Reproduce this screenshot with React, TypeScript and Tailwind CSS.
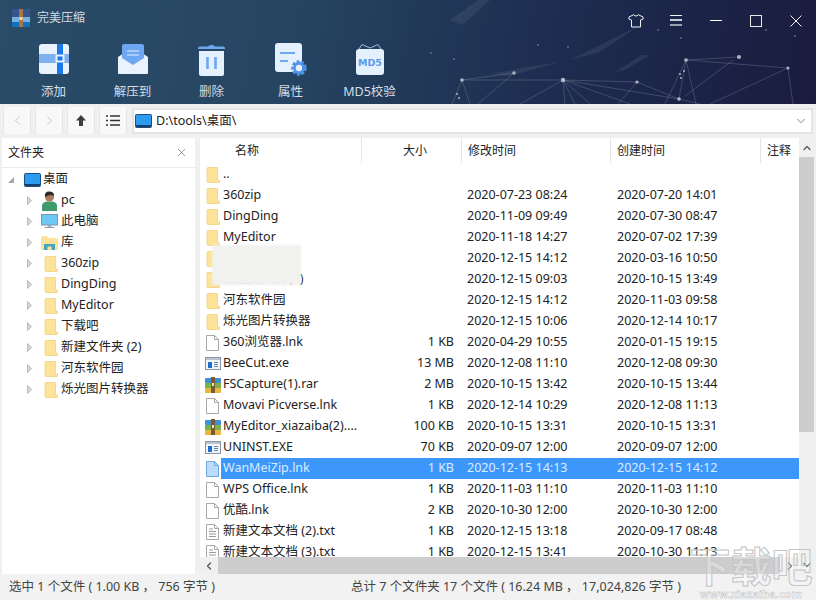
import type { ReactNode } from "react"
import { ChevronDown, ChevronLeft, ChevronRight, ChevronUp, X } from "lucide-react"

const files = [
  { name: "..", icon: "folder", size: "", mod: "", made: "" },
  { name: "360zip", icon: "folder", size: "", mod: "2020-07-23 08:24", made: "2020-07-20 14:01" },
  { name: "DingDing", icon: "folder", size: "", mod: "2020-11-09 09:49", made: "2020-07-30 08:47" },
  { name: "MyEditor", icon: "folder", size: "", mod: "2020-11-18 14:27", made: "2020-07-02 17:39" },
  { name: "下载吧", icon: "folder", size: "", mod: "2020-12-15 14:12", made: "2020-03-16 10:50" },
  { name: "新建文件夹 (2)", icon: "folder", size: "", mod: "2020-12-15 09:03", made: "2020-10-15 13:49" },
  { name: "河东软件园", icon: "folder", size: "", mod: "2020-12-15 14:12", made: "2020-11-03 09:58" },
  { name: "烁光图片转换器", icon: "folder", size: "", mod: "2020-12-15 10:06", made: "2020-12-14 10:17" },
  { name: "360浏览器.lnk", icon: "doc", size: "1 KB", mod: "2020-04-29 10:55", made: "2020-01-15 19:15" },
  { name: "BeeCut.exe", icon: "exe", size: "13 MB", mod: "2020-12-08 11:10", made: "2020-12-08 09:30" },
  { name: "FSCapture(1).rar", icon: "rar", size: "2 MB", mod: "2020-10-15 13:42", made: "2020-10-15 13:44" },
  { name: "Movavi Picverse.lnk", icon: "doc", size: "1 KB", mod: "2020-12-14 10:29", made: "2020-12-08 11:13" },
  { name: "MyEditor_xiazaiba(2)....", icon: "rar", size: "100 KB", mod: "2020-10-15 13:31", made: "2020-10-15 13:31" },
  { name: "UNINST.EXE", icon: "exe", size: "70 KB", mod: "2020-09-07 12:00", made: "2020-09-07 12:00" },
  { name: "WanMeiZip.lnk", icon: "sel", size: "1 KB", mod: "2020-12-15 14:13", made: "2020-12-15 14:12" },
  { name: "WPS Office.lnk", icon: "doc", size: "1 KB", mod: "2020-11-03 11:10", made: "2020-11-03 11:10" },
  { name: "优酷.lnk", icon: "doc", size: "2 KB", mod: "2020-10-30 12:00", made: "2020-10-30 12:00" },
  { name: "新建文本文档 (2).txt", icon: "txt", size: "1 KB", mod: "2020-12-15 13:18", made: "2020-09-17 08:48" },
  { name: "新建文本文档 (3).txt", icon: "txt", size: "1 KB", mod: "2020-12-15 13:41", made: "2020-10-30 11:13" },
]

const treeFolders = ["360zip", "DingDing", "MyEditor", "下载吧", "新建文件夹 (2)", "河东软件园", "烁光图片转换器"]

function FolderIcon() {
  return (
    <svg width="14" height="16" viewBox="0 0 14 16">
      <path d="M1 1.5Q1 .5 2 .5H11.5V13H13.5V15.5H2Q1 15.5 1 14.5Z" fill="#fde39a" stroke="#f3d27a" strokeWidth="0.8" />
    </svg>
  )
}

function FileIcon({ icon }: { icon: string }) {
  if (icon === "folder") return <FolderIcon />
  if (icon === "doc" || icon === "sel" || icon === "txt") {
    const fill = icon === "sel" ? "#bcdcfb" : "#ffffff"
    const line = icon === "sel" ? "#6ea8dc" : "#a8a8a8"
    return (
      <svg width="13" height="16" viewBox="0 0 13 16">
        <path d="M.5.5H8.5L12.5 4.5V15.5H.5Z" fill={fill} stroke={line} />
        <path d="M8.5.5V4.5H12.5" fill="none" stroke={line} />
        {icon === "txt" && <path d="M3 5H7M3 7.5H10M3 10H10M3 12.5H10" stroke="#9a9a9a" />}
      </svg>
    )
  }
  if (icon === "exe") {
    return (
      <svg width="16" height="13" viewBox="0 0 16 13" className="-ml-[1px] shrink-0">
        <rect x=".5" y=".5" width="15" height="12" fill="#f2f4f6" stroke="#8b96a3" />
        <rect x="1" y="1" width="14" height="2" fill="#b8c4d0" />
        <rect x="3" y="5" width="4" height="6" fill="#1c6fd0" />
        <path d="M9 5.5H13M9 7.5H13M9 9.5H13" stroke="#5f87b5" />
      </svg>
    )
  }
  return (
    <svg width="16" height="16" viewBox="0 0 16 16" className="-ml-[1px] shrink-0">
      <rect x="0" y="1" width="16" height="5" rx="1" fill="#3f8fd2" />
      <rect x="0" y="6" width="16" height="5" fill="#78b24a" />
      <rect x="0" y="11" width="16" height="5" rx="1" fill="#e7b63e" />
      <rect x="6" y="0" width="4" height="16" fill="#7a5a30" />
      <rect x="7" y="6" width="2" height="3" fill="#f3e2b8" />
    </svg>
  )
}

function Caret({ open }: { open?: boolean }) {
  return open ? (
    <svg width="6" height="6" viewBox="0 0 6 6"><path d="M6 0V6H0Z" fill="#a6a6a6" /></svg>
  ) : (
    <svg width="5" height="9" viewBox="0 0 5 9"><path d="M.5.5L4.5 4.5L.5 8.5Z" fill="#d8d8d8" stroke="#a6a6a6" strokeWidth="0.7" /></svg>
  )
}

function DesktopIcon() {
  return (
    <svg width="17" height="14" viewBox="0 0 17 14">
      <rect x=".5" y=".5" width="16" height="13" rx="1" fill="#2c9bf0" stroke="#1a4f86" />
      <rect x="1" y="11" width="15" height="2" fill="#17406e" />
    </svg>
  )
}

function PcUser() {
  return (
    <svg width="16" height="20" viewBox="0 0 16 20">
      <path d="M0 20V15Q0 11 5 10.5H10Q15 11 15 15V20Z" fill="#3f9a6c" />
      <circle cx="7.5" cy="6" r="4.5" fill="#a97c5c" />
      <path d="M3 6Q2 0 8 .5Q12.5 1 12 5Q9 2.5 3 6Z" fill="#2f2a28" />
    </svg>
  )
}

function Computer() {
  return (
    <svg width="17" height="15" viewBox="0 0 17 15">
      <rect x=".5" y=".5" width="16" height="10.5" fill="#6fc7f5" stroke="#7c97ad" />
      <path d="M6.5 11H10.5V13H6.5Z" fill="#9fb4c4" />
      <path d="M3.5 13.5H13.5" stroke="#8aa0b2" />
    </svg>
  )
}

function Library() {
  return (
    <svg width="17" height="14" viewBox="0 0 17 14">
      <path d="M0 2Q0 0 2 0H6L8 2H15Q17 2 17 4V14H0Z" fill="#fde39a" />
      <path d="M3 14V8H14V14H10.5V10.5H6.5V14Z" fill="#46a6bb" />
    </svg>
  )
}

function ToolLabel({ icon, label }: { icon: ReactNode; label: string }) {
  return (
    <div className="w-[79px] flex flex-col items-center">
      <div className="h-[34px] flex items-center justify-center">{icon}</div>
      <div className="mt-[7px] text-[12.5px] leading-[18px] text-[#d5dee6]">{label}</div>
    </div>
  )
}

export default function App() {
  return (
    <div className="relative w-[816px] h-[600px] flex flex-col overflow-hidden bg-[#f0f0f0] text-[12.5px] text-[#222] font-['Noto_Sans','Noto_Sans_CJK_SC',sans-serif]">
      {/* Title + toolbar */}
      <header className="relative h-[104px] shrink-0 overflow-hidden bg-[linear-gradient(100deg,#2a4c68_0%,#264562_35%,#1d2c50_68%,#1a1c3e_100%)]">
        <svg className="absolute inset-0" width="816" height="104" viewBox="0 0 816 104">
          <g stroke="#8d93a8" strokeWidth="0.6" fill="none" opacity="0.55">
            <path d="M462 80L514 73M462 80L563 80M462 80L452 104M462 80L470 104M514 73L478 104M563 80L520 104M563 80L637 82M563 80L679 99M563 80L565 104M563 80L575 104M563 80L590 104M563 80L630 104M637 82L679 99M637 82L618 104M679 99L686 60M686 60L665 104M686 60L696 104M686 60L739 57M686 60L788 68M733 60L685 96M788 68L710 104M788 68L793 104M679 99L700 104" />
          </g>
          <g fill="#c9ccd6" opacity="0.85">
            <circle cx="462" cy="80" r="1.8" /><circle cx="514" cy="73" r="1.8" /><circle cx="563" cy="80" r="2.2" />
            <circle cx="637" cy="82" r="1.6" /><circle cx="679" cy="99" r="1.8" /><circle cx="686" cy="60" r="1.8" />
            <circle cx="739" cy="57" r="2" /><circle cx="788" cy="68" r="1.6" /><circle cx="457" cy="94" r="1" />
            <circle cx="459" cy="98" r="1" /><circle cx="680" cy="74" r="1" /><circle cx="684" cy="71" r="1" /><circle cx="681" cy="78" r="1" />
          </g>
          <g fill="#8790a6" opacity="0.6">
            <circle cx="431" cy="53" r="1" /><circle cx="454" cy="59" r="1" /><circle cx="538" cy="45" r="1" /><circle cx="568" cy="47" r="1" />
            <circle cx="658" cy="30" r="1" /><circle cx="681" cy="38" r="1" /><circle cx="795" cy="36" r="1" /><circle cx="766" cy="30" r="1" />
          </g>
          <g fill="#7f8798" opacity="0.16">
            <path d="M570 60L630 30L640 25L600 52Z" /><path d="M490 74L540 65L560 62L510 76Z" /><path d="M615 72L642 55L650 55L625 70Z" /><path d="M450 20L478 0L490 0L462 25Z" />
          </g>
        </svg>

        <div className="relative h-[41px] flex items-center justify-between">
          <div className="flex items-center pl-[12px] gap-[7px] -mt-[6px]">
            <svg width="18" height="18" viewBox="0 0 18 18">
              <rect y="0" width="18" height="8" fill="#34568c" />
              <rect y="8" width="18" height="5" fill="#78b0e0" />
              <rect y="13" width="18" height="5" fill="#0f6fc0" />
              <rect x="7" width="4" height="18" fill="#a9763f" />
              <rect x="7.5" y="8" width="3" height="3" fill="#f3e2b8" />
            </svg>
            <span className="text-[12px] text-[#d2dae2]">完美压缩</span>
          </div>
          <div className="flex items-center text-white">
            <div className="w-[40px] flex justify-center">
              <svg width="16" height="14" viewBox="0 0 16 14" fill="none" stroke="#f2f2f2" strokeWidth="1">
                <path d="M5.5.8L1 3L.8 5L3.5 6V13H12.5V6L15.2 5L15 3L10.5.8Q8 3.5 5.5.8Z" />
              </svg>
            </div>
            <div className="w-[40px] flex justify-center">
              <div className="w-[12px] flex flex-col gap-[3px]">
                <div className="h-[1px] bg-[#f2f2f2]" />
                <div className="h-[2px] bg-[#c9ccd6]" />
                <div className="h-[2px] bg-[#9aa0ae]" />
              </div>
            </div>
            <div className="w-[40px] flex justify-center"><div className="w-[12px] h-[1px] bg-white" /></div>
            <div className="w-[40px] flex justify-center"><div className="w-[12px] h-[12px] border border-[#e8e8e8]" /></div>
            <div className="w-[40px] flex justify-center">
              <svg width="12" height="12" viewBox="0 0 12 12" stroke="#f2f2f2"><path d="M.5.5L11.5 11.5M11.5.5L.5 11.5" /></svg>
            </div>
          </div>
        </div>

        <div className="relative flex pl-[14px] pt-[1px]">
          <ToolLabel
            label="添加"
            icon={
              <svg width="30" height="30" viewBox="0 0 30 30">
                <rect width="30" height="30" rx="3" fill="#eaf3fd" />
                <rect y="10" width="30" height="9" fill="#7fb1ef" />
                <rect x="18" width="6" height="30" fill="#1d79ea" />
                <rect x="16.5" y="10.5" width="9" height="8" fill="#eaf3fd" />
                <rect x="18.5" y="12.5" width="5" height="4" fill="#1d79ea" />
              </svg>
            }
          />
          <ToolLabel
            label="解压到"
            icon={
              <svg width="30" height="30" viewBox="0 0 30 30">
                <path d="M0 13L15 3L30 13V29Q30 30 29 30H1Q0 30 0 29Z" fill="#eaf3fd" />
                <path d="M4 2Q4 0 6 0H24Q26 0 26 2V14L15 21L4 14Z" fill="#6ea6f2" />
                <path d="M9 7H21M9 11H21" stroke="#e3efff" strokeWidth="1.2" />
              </svg>
            }
          />
          <ToolLabel
            label="删除"
            icon={
              <svg width="27" height="33" viewBox="0 0 27 33">
                <path d="M0 5Q0 3.5 2 3.5H10Q13.5 0 17 3.5H25Q27 3.5 27 5V6H0Z" fill="#6ea6f2" />
                <path d="M1 8H26V31Q26 33 24 33H3Q1 33 1 31Z" fill="#e4f0fd" />
                <path d="M9.5 14V26M17.5 14V26" stroke="#6ea6f2" strokeWidth="2.6" />
              </svg>
            }
          />
          <ToolLabel
            label="属性"
            icon={
              <svg width="32" height="33" viewBox="0 0 32 33">
                <rect width="27" height="29" rx="3" fill="#e4f0fd" />
                <path d="M5 10H20M5 18H13" stroke="#6ea6f2" strokeWidth="2.2" />
                <circle cx="24" cy="25" r="6" fill="none" stroke="#4f93ea" strokeWidth="3.6" strokeDasharray="2.8 1.4" />
                <circle cx="24" cy="25" r="4.6" fill="none" stroke="#4f93ea" strokeWidth="2.6" />
              </svg>
            }
          />
          <ToolLabel
            label="MD5校验"
            icon={
              <svg width="28" height="32" viewBox="0 0 28 32">
                <path d="M3 6L6 1.5L14 5L22 1.5L25 6" fill="none" stroke="#9dbde6" strokeWidth="1" />
                <rect y="6" width="28" height="26" rx="3" fill="#e4f0fd" />
                <text x="14" y="23" textAnchor="middle" fontSize="9.5" fontWeight="700" fill="#5d9ae8" fontFamily="'DejaVu Sans', sans-serif">MD5</text>
              </svg>
            }
          />
        </div>
      </header>

      {/* Navigation */}
      <div className="h-[34px] shrink-0 flex items-start pl-[3px] pt-[3px] pr-[3px] gap-[4px]">
        <div className="w-[28px] h-[27px] bg-[#f8f8f8] border-x border-[#e6e6e6] flex items-center justify-center"><ChevronLeft size={15} strokeWidth={1} color="#a9a9a9" /></div>
        <div className="w-[28px] h-[27px] bg-[#f8f8f8] border-x border-[#e6e6e6] flex items-center justify-center"><ChevronRight size={15} strokeWidth={1} color="#a9a9a9" /></div>
        <div className="w-[28px] h-[27px] bg-[#f8f8f8] border-x border-[#e6e6e6] flex items-center justify-center">
          <svg width="10" height="11" viewBox="0 0 10 11"><path d="M5 0L10 5.5H7V11H3V5.5H0Z" fill="#3d3d3d" /></svg>
        </div>
        <div className="w-[28px] h-[27px] bg-[#f8f8f8] border-x border-[#e6e6e6] flex items-center justify-center">
          <svg width="14" height="11" viewBox="0 0 14 11" stroke="#333" strokeWidth="1.4"><path d="M0 1H2M4 1H14M0 5.5H2M4 5.5H14M0 10H2M4 10H14" /></svg>
        </div>
        <div className="flex-1 h-[26px] ml-[1px] mt-[1px] bg-white border-2 border-[#e4e4e4] flex items-center pl-[1px] pr-[3px]">
          <DesktopIcon />
          <span className="ml-[4px] text-[12.5px]">D:\tools\桌面\</span>
          <ChevronDown size={14} strokeWidth={1.2} color="#555" className="ml-auto" />
        </div>
      </div>

      {/* Panels */}
      <div className="h-[436px] shrink-0 flex pl-[2px] pr-[2px]">
        <aside className="w-[193px] bg-white flex flex-col">
          <div className="h-[30px] shrink-0 flex items-center justify-between pl-[6px] pr-[7px] border-b border-[#eaeaea]">
            <span className="text-[12px]">文件夹</span>
            <X size={13} strokeWidth={1} color="#444" />
          </div>
          <div className="h-[21px] mt-[1px] flex items-center pl-[6px]">
            <Caret open />
            <span className="ml-[10px] flex"><DesktopIcon /></span>
            <span className="ml-[2px]">桌面</span>
          </div>
          {[
            { name: "pc", icon: <PcUser /> },
            { name: "此电脑", icon: <Computer /> },
            { name: "库", icon: <Library /> },
          ].map((row) => (
            <div key={row.name} className="h-[21px] flex items-center pl-[25px]">
              <Caret />
              <span className="w-[29px] flex justify-center pl-[6px]">{row.icon}</span>
              <span>{row.name}</span>
            </div>
          ))}
          {treeFolders.map((name) => (
            <div key={name} className="h-[21px] flex items-center pl-[25px]">
              <Caret />
              <span className="w-[29px] flex justify-center pl-[8px]"><FolderIcon /></span>
              <span>{name}</span>
            </div>
          ))}
        </aside>

        <div className="w-[5px] shrink-0" />

        <section className="relative flex-1 flex bg-white">
          <div className="flex-1 min-w-0 flex flex-col">
            <div className="h-[26px] shrink-0 flex text-[12px] leading-[25px]">
              <div className="w-[162px] h-[25px] pl-[35px] border-r border-[#e5e5e5]">名称</div>
              <div className="w-[100px] h-[25px] pl-[41px] border-r border-[#e5e5e5]">大小</div>
              <div className="w-[149px] h-[25px] pl-[6px] border-r border-[#e5e5e5]">修改时间</div>
              <div className="w-[150px] h-[25px] pl-[6px] border-r border-[#e5e5e5]">创建时间</div>
              <div className="pl-[6px]">注释</div>
            </div>
            <div className="relative flex-1 overflow-hidden">
              {files.map((f) => {
                const selected = f.icon === "sel"
                return (
                  <div key={f.name} className="h-[21px] flex items-center">
                    <div className="w-[21px] pl-[6px] shrink-0 flex justify-start"><FileIcon icon={f.icon} /></div>
                    <div className={selected ? "flex-1 h-[21px] flex items-center bg-[#3d97fb] text-[#dcecff]" : "flex-1 h-[21px] flex items-center"}>
                      <div className="w-[140px] pl-[2px] whitespace-nowrap overflow-hidden">{f.name}</div>
                      <div className="w-[93px] text-right">{f.size}</div>
                      <div className="w-[150px] pl-[13px]">{f.mod}</div>
                      <div className="pl-[13px]">{f.made}</div>
                    </div>
                  </div>
                )
              })}
              {/* names are blurred out in the screenshot */}
              <div className="absolute left-[12px] top-[81px] w-[89px] h-[40px] bg-[#f1f1f0] blur-[1px]" />
            </div>
            <div className="h-[17px] shrink-0 flex items-center bg-[#f0f0f0]">
              <div className="w-[18px] flex justify-center"><ChevronLeft size={12} strokeWidth={2.5} color="#555" /></div>
              <div className="w-[562px] h-full bg-[#cdcdcd]" />
              <div className="flex-1 flex justify-center"><ChevronRight size={12} strokeWidth={2.5} color="#555" /></div>
            </div>
          </div>
          <div className="w-[15px] shrink-0 flex flex-col bg-[#f0f0f0]">
            <div className="h-[19px] flex items-center justify-center"><ChevronUp size={12} strokeWidth={2.5} color="#555" /></div>
            <div className="h-[275px] bg-[#cdcdcd]" />
            <div className="mt-auto h-[19px] flex items-center justify-center"><ChevronDown size={12} strokeWidth={2.5} color="#555" /></div>
          </div>
        </section>
      </div>

      {/* Status bar */}
      <footer className="flex-1 flex items-center bg-[#f2f2f2] text-[12.5px] text-[#444] whitespace-nowrap">
        <div className="w-[351px] pl-[9px]">选中 1 个文件 ( 1.00 KB ， 756 字节 )</div>
        <div>总计 7 个文件夹 17 个文件 ( 16.24 MB ， 17,024,826 字节 )</div>
      </footer>

      {/* site watermark */}
      <div className="absolute right-[2px] bottom-0 w-[126px] flex flex-col items-center leading-none pointer-events-none">
        <span className="text-[41px] font-bold leading-[44px] text-white/25 [-webkit-text-stroke:1px_#c4c4c4]">下载吧</span>
        <span className="text-[11px] leading-[12px] font-bold text-white/60 [-webkit-text-stroke:0.4px_#b5b5b5]">www.xiazaiba.com</span>
      </div>
    </div>
  )
}
